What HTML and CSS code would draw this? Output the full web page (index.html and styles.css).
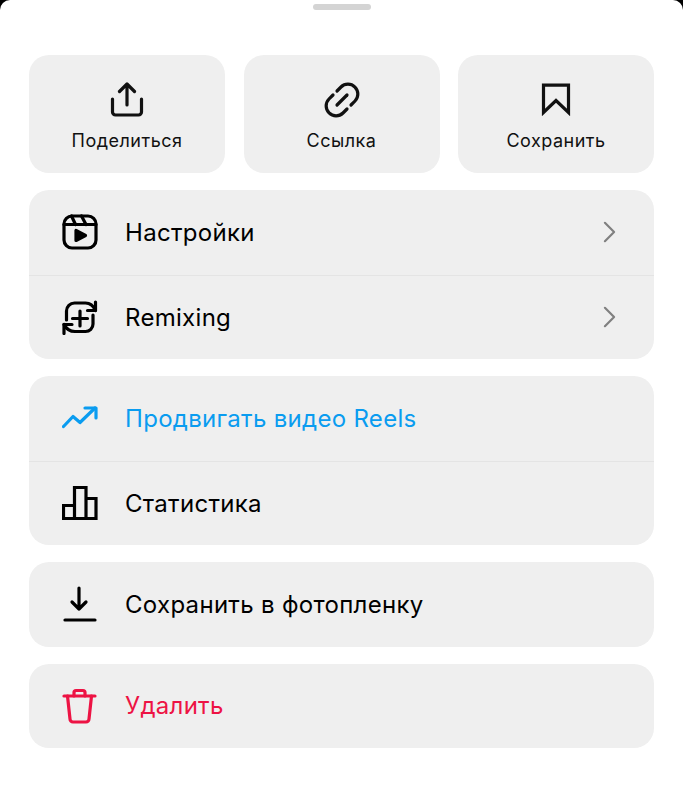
FILE: index.html
```html
<!DOCTYPE html>
<html lang="en">
<head>
    <meta charset="UTF-8">
    <meta name="viewport" content="width=device-width, initial-scale=1.0">
    <title>Reel menu</title>
    <link rel="stylesheet" href="styles.css">
</head>
<body>

<div class="sheet">
    <div class="handle"></div>

    <div class="actions">
        <div class="action">
            <svg class="action-icon" viewBox="0 0 36 36">
                <path d="M3.500 17v13a3 3 0 0 0 3 3h23a3 3 0 0 0 3-3V17"/>
                <path d="M18 23V2.500M10.500 9.500 18 2l7.500 7.500"/>
            </svg>
            <span>Поделиться</span>
        </div>
        <div class="action">
            <svg class="action-icon" viewBox="0 0 36 36">
                <path d="M13 9l4-4a9.900 9.900 0 0 1 14 14l-4 4"/>
                <path d="M23 27l-4 4a9.900 9.900 0 0 1-14-14l4-4"/>
                <path d="M13 23 23 13"/>
            </svg>
            <span>Ссылка</span>
        </div>
        <div class="action">
            <svg class="action-icon" viewBox="0 0 36 36">
                <path class="miter" d="M5.500 3.200h25v27.300L18 18.500 5.500 30.500z"/>
            </svg>
            <span>Сохранить</span>
        </div>
    </div>

    <div class="group">
        <div class="row">
            <svg class="row-icon" viewBox="0 0 36 36">
                <rect x="2" y="2" width="32" height="32" rx="8"/>
                <path d="M2 10.500h32M9.500 2l4 8.500M19.500 2l4.500 8.500"/>
                <path class="solid" d="M14 16.500v10l9.500-5z"/>
            </svg>
            <span class="row-text">Настройки</span>
            <svg class="chevron" viewBox="0 0 14 24"><path d="M2 2l10 10L2 22"/></svg>
        </div>
        <div class="row">
            <svg class="row-icon" viewBox="0 0 36 36">
                <path d="M4.500 21v-9a8 8 0 0 1 8-8h11c5 0 8 3 10 7.500"/>
                <path d="M33.500 3v8.500h-8"/>
                <path d="M31 16v9a7.500 7.500 0 0 1-7.500 7.500H13c-5 0-9-3-11-7"/>
                <path d="M2 34.500v-9h8"/>
                <path d="M18 12v15M10.500 19.500h15"/>
            </svg>
            <span class="row-text">Remixing</span>
            <svg class="chevron" viewBox="0 0 14 24"><path d="M2 2l10 10L2 22"/></svg>
        </div>
    </div>

    <div class="group">
        <div class="row">
            <svg class="row-icon blue" viewBox="0 0 36 36">
                <path d="M1.500 26.500 11 16.500l7 6L33 8"/>
                <path d="M23 8h11v10"/>
            </svg>
            <span class="row-text blue">Продвигать видео Reels</span>
        </div>
        <div class="row">
            <svg class="row-icon" viewBox="0 0 36 36">
                <path class="miter" d="M1.500 33.500v-13h11v13zM12.500 33.500v-31H24v31zM24 33.500v-20h10v20z"/>
            </svg>
            <span class="row-text">Статистика</span>
        </div>
    </div>

    <div class="group">
        <div class="row">
            <svg class="row-icon" viewBox="0 0 36 36">
                <path d="M17 2v21M10 16l7 7 7-7"/>
                <path d="M3 34h30"/>
            </svg>
            <span class="row-text">Сохранить в фотопленку</span>
        </div>
    </div>

    <div class="group">
        <div class="row">
            <svg class="row-icon red" viewBox="0 0 36 36">
                <path d="M2 8h31"/>
                <path d="M5.500 8l2.500 23a3 3 0 0 0 3 3h13a3 3 0 0 0 3-3l2.500-23"/>
                <path d="M12 8V4.500a2 2 0 0 1 2-2h7a2 2 0 0 1 2 2V8"/>
            </svg>
            <span class="row-text red">Удалить</span>
        </div>
    </div>
</div>

</body>
</html>
```

FILE: styles.css
```css
html, body {
    height: 100%;
}

body {
    margin: 0;
    background-color: #000;
    font-family: 'Inter', 'Liberation Sans', sans-serif;
    color: #000;
}

.sheet {
    min-height: 100%;
    box-sizing: border-box;
    background-color: #fff;
    border-radius: 10px 10px 0 0;
    padding: 4px 29px 0;
    display: flex;
    flex-direction: column;
    gap: 17px;
}

.handle {
    width: 58px;
    height: 6px;
    border-radius: 3px;
    background-color: #d4d4d4;
    align-self: center;
    margin-bottom: 28px;
}

.actions {
    display: grid;
    grid-template-columns: repeat(3, 196px);
    justify-content: space-between;
}

.action {
    height: 118px;
    box-sizing: border-box;
    padding-top: 27px;
    border-radius: 20px;
    background-color: #efefef;
    display: flex;
    flex-direction: column;
    align-items: center;
    font-size: 18px;
    line-height: 22px;
    letter-spacing: 0.5px;
    color: #111;
}

.action-icon {
    width: 36px;
    height: 36px;
    margin-bottom: 12px;
}

svg {
    fill: none;
    stroke: currentColor;
    stroke-width: 3.200;
    stroke-linecap: round;
    stroke-linejoin: round;
    flex: none;
}

svg .miter {
    stroke-linejoin: miter;
    stroke-linecap: butt;
}

svg .solid {
    fill: currentColor;
}

.group {
    border-radius: 20px;
    background-color: #efefef;
}

.row {
    height: 84.5px;
    box-sizing: border-box;
    padding: 0 38px 0 33px;
    display: flex;
    align-items: center;
}

.row + .row {
    border-top: 1px solid #e4e4e4;
}

.row-icon {
    width: 36px;
    height: 36px;
    margin-right: 27px;
}

.row-text {
    flex: 1;
    font-size: 24px;
    letter-spacing: 0.3px;
}

.chevron {
    width: 13px;
    height: 22px;
    color: #808080;
    stroke-width: 2.400;
}

.blue {
    color: #0a9cf0;
}

.red {
    color: #ed1344;
}
```
